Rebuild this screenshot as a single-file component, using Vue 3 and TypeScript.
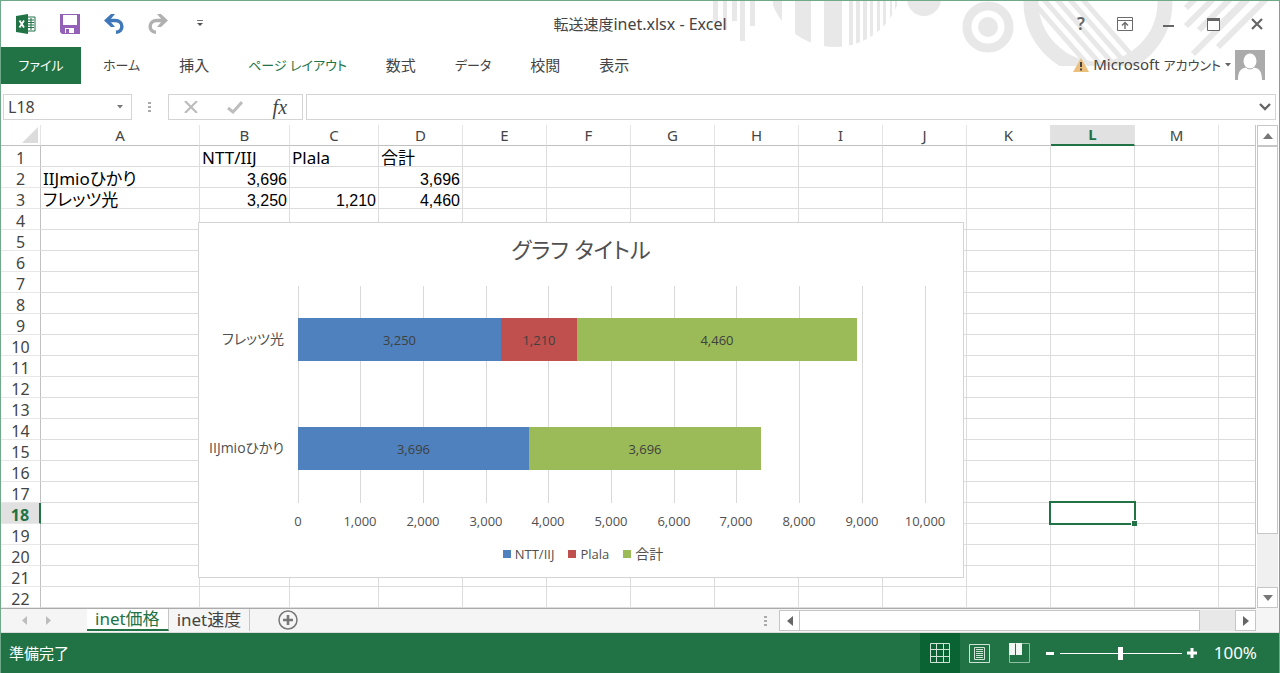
<script setup lang="ts">
import { computed, ref } from 'vue'

interface Segment { label: string; value: number; color: string }
interface Category { name: string; segments: Segment[] }

const nameBox = ref('L18')
const formula = ref('')
const zoom = ref(50)
const activeSheet = ref('inet価格')

const ribbonTabs = [
  { label: 'ファイル', kind: 'file', kana: true },
  { label: 'ホーム', kind: 'plain', kana: true },
  { label: '挿入', kind: 'plain', kana: false },
  { label: 'ページ レイアウト', kind: 'current', kana: true },
  { label: '数式', kind: 'plain', kana: false },
  { label: 'データ', kind: 'plain', kana: true },
  { label: '校閲', kind: 'plain', kana: false },
  { label: '表示', kind: 'plain', kana: false },
]

const columns = ['A', 'B', 'C', 'D', 'E', 'F', 'G', 'H', 'I', 'J', 'K', 'L', 'M', '']
const rowCount = 22
const selected = { col: 'L', row: 18 }

const cells: Record<string, string | number> = {
  B1: 'NTT/IIJ', C1: 'Plala', D1: '合計',
  A2: 'IIJmioひかり', B2: 3696, D2: 3696,
  A3: 'フレッツ光', B3: 3250, C3: 1210, D3: 4460,
}

const fmt = (n: number) => n.toLocaleString('en-US')
const cellText = (key: string) => {
  const v = cells[key]
  return typeof v === 'number' ? fmt(v) : v ?? ''
}

const blue = '#4e81bd'
const red = '#c0504d'
const green = '#9bbb59'

const categories: Category[] = [
  {
    name: 'フレッツ光',
    segments: [
      { label: 'NTT/IIJ', value: 3250, color: blue },
      { label: 'Plala', value: 1210, color: red },
      { label: '合計', value: 4460, color: green },
    ],
  },
  {
    name: 'IIJmioひかり',
    segments: [
      { label: 'NTT/IIJ', value: 3696, color: blue },
      { label: '合計', value: 3696, color: green },
    ],
  },
]

const legend = categories[0].segments
const ticks = Array.from({ length: 11 }, (_, i) => i * 1000)
const plot = { left: 99, top: 63, width: 627, height: 217, bar: 43 }
const xOf = (v: number) => plot.left + Math.floor((v / 10000) * plot.width)

const bars = computed(() =>
  categories.map((c, i) => {
    const band = plot.height / categories.length
    const mid = Math.round(plot.top + band * (i + 0.5))
    let sum = 0
    const parts = c.segments.map((s) => {
      const x = xOf(sum)
      sum += s.value
      return { ...s, x, w: xOf(sum) - x }
    })
    return { name: c.name, mid, parts }
  }),
)
</script>

<template>
  <div class="window">
    <svg class="decor" width="580" height="65" viewBox="700 1 580 65" aria-hidden="true">
      <defs>
        <clipPath id="disc"><circle cx="835" cy="-20" r="67" /></clipPath>
        <clipPath id="ringHole"><circle cx="1098" cy="2" r="60" /></clipPath>
      </defs>
      <g fill="#e8e8e8">
        <rect x="713" y="0" width="5" height="22" />
        <rect x="723" y="0" width="4" height="30" />
        <rect x="732" y="0" width="5" height="21" />
        <rect x="740" y="0" width="5" height="41" />
        <rect x="750" y="0" width="5" height="26" />
        <g clip-path="url(#disc)">
          <rect x="773" y="0" width="9" height="60" />
          <rect x="795" y="0" width="16" height="60" />
          <rect x="824" y="0" width="18" height="60" />
          <rect x="849" y="0" width="4" height="60" />
          <rect x="856" y="0" width="4" height="60" />
          <rect x="863" y="0" width="4" height="60" />
          <rect x="870" y="0" width="3" height="60" />
          <rect x="877" y="0" width="3" height="60" />
          <rect x="883" y="0" width="3" height="60" />
          <rect x="890" y="0" width="2" height="60" />
          <rect x="895" y="0" width="2" height="60" />
        </g>
        <circle cx="924" cy="-1" r="17" />
        <circle cx="988" cy="27" r="10" />
      </g>
      <circle cx="988" cy="27" r="21" fill="none" stroke="#e8e8e8" stroke-width="9" />
      <circle cx="1098" cy="2" r="67" fill="none" stroke="#e8e8e8" stroke-width="15" />
      <g clip-path="url(#ringHole)" stroke="#e8e8e8" stroke-width="5">
        <path d="M1026 -6L1096 74M1039 -6L1109 74M1052 -6L1122 74M1065 -6L1135 74M1078 -6L1148 74" />
      </g>
      <g stroke="#e8e8e8" stroke-width="6">
        <path d="M1186 8L1196 -2M1186 26L1214 -2M1199 30L1231 -2M1217 28L1247 -2M1193 54L1249 -2M1218 47L1267 -2" />
      </g>
    </svg>

    <header class="titlebar">
      <div class="quick">
        <button type="button" aria-label="Excel">
          <svg width="20" height="20" viewBox="0 0 20 20">
            <path d="M11 3H19V17H11Z" fill="#fff" stroke="#217346" />
            <path d="M12 6H18M12 8.500H18M12 11H18M12 13.500H18M15 4V16" stroke="#217346" fill="none" />
            <path d="M0 2L12 0V20L0 18Z" fill="#217346" />
            <path d="M3.500 6.500L8 13.500M8 6.500L3.500 13.500" stroke="#fff" stroke-width="1.800" />
          </svg>
        </button>
        <button type="button" aria-label="上書き保存">
          <svg width="20" height="20" viewBox="0 0 20 20">
            <path d="M0 0H20V20H2L0 18Z" fill="#9461b8" />
            <path d="M3 1H17V11H3Z" fill="#fff" />
            <path d="M5 14H14V19H5Z" fill="#fff" />
            <path d="M6 15H9V19H6Z" fill="#9461b8" />
          </svg>
        </button>
        <button type="button" aria-label="元に戻す">
          <svg width="20" height="20" viewBox="0 0 20 20">
            <path d="M3 6.500H11C20 6.500 20 18 12 18.300" fill="none" stroke="#3f77b8" stroke-width="3.400" />
            <path d="M0 6.500L7 0H11L5.500 6.500L11 13H7Z" fill="#3f77b8" />
          </svg>
        </button>
        <button type="button" aria-label="やり直し">
          <svg width="20" height="20" viewBox="0 0 20 20">
            <path d="M17 6.500H9C0 6.500 0 18 8 18.300" fill="none" stroke="#b0b0b0" stroke-width="3.400" />
            <path d="M20 6.500L13 0H9L14.500 6.500L9 13H13Z" fill="#b0b0b0" />
          </svg>
        </button>
        <button type="button" class="more" aria-label="クイック アクセス ツール バーのユーザー設定">
          <svg width="6" height="8" viewBox="0 0 6 8"><path d="M0 .500H6" stroke="#777" /><path d="M0 3H6L3 6Z" fill="#555" /></svg>
        </button>
      </div>
      <h1><span class="kanji">転送速度</span>inet.xlsx - Excel</h1>
      <div class="winctl">
        <button type="button" aria-label="ヘルプ" class="help">?</button>
        <button type="button" aria-label="リボンの表示オプション">
          <svg width="16" height="14" viewBox="0 0 16 14" fill="none" stroke="#6b6b6b"><path d="M.5.500H15.500V13.500H.5ZM.5 3.500H15.500" /><path d="M8 12V6M5 8.500L8 5.500L11 8.500" stroke-width="1.400" /></svg>
        </button>
        <button type="button" aria-label="最小化">
          <svg width="12" height="14" viewBox="0 0 12 14"><path d="M0 8H11V10H0Z" fill="#666" /></svg>
        </button>
        <button type="button" aria-label="最大化">
          <svg width="13" height="13" viewBox="0 0 13 13"><path d="M.5.500H12.500V12.500H.5Z" fill="#fff" stroke="#666" /><path d="M0 0H13V3H0Z" fill="#666" /></svg>
        </button>
        <button type="button" aria-label="閉じる">
          <svg width="12" height="12" viewBox="0 0 12 12"><path d="M1 1L11 11M11 1L1 11" stroke="#666" stroke-width="2.200" /></svg>
        </button>
      </div>
    </header>

    <nav class="ribbon">
      <button v-for="t in ribbonTabs" :key="t.label" type="button" :class="['tab', t.kind, { kana: t.kana }]">{{ t.label }}</button>
      <button type="button" class="account">
        <svg width="16" height="14" viewBox="0 0 16 14"><path d="M8 0L16 14H0Z" fill="#edbf7c" /><path d="M7 4H9V9H7ZM7 10.500H9V12.500H7Z" fill="#444" /></svg>
        <span class="acct">Microsoft <span class="kana">アカウント</span></span>
        <svg class="caret" width="6" height="4" viewBox="0 0 6 4"><path d="M0 0H6L3 3.500Z" fill="#666" /></svg>
        <svg width="30" height="30" viewBox="0 0 30 30"><path d="M0 0H30V30H0Z" fill="#ababab" /><ellipse cx="15" cy="11" rx="6.500" ry="7.500" fill="#fff" /><path d="M3 30C3 21 6 18.500 11 17.500C13 20 17 20 19 17.500C24 18.500 27 21 27 30Z" fill="#fff" /></svg>
      </button>
    </nav>

    <div class="formula">
      <div class="namebox">
        <input v-model="nameBox" type="text" aria-label="名前ボックス" />
        <button type="button" aria-label="名前の一覧"><svg width="6" height="4" viewBox="0 0 6 4"><path d="M0 0H6L3 3.500Z" fill="#777" /></svg></button>
      </div>
      <svg class="grip" width="3" height="11" viewBox="0 0 3 11"><path d="M0 0H3V2H0ZM0 4H3V6H0ZM0 8H3V10H0Z" fill="#aaa" /></svg>
      <div class="fxgroup">
        <button type="button" aria-label="キャンセル"><svg width="14" height="12" viewBox="0 0 14 12"><path d="M1 0L13 12M13 0L1 12" stroke="#bdbdbd" stroke-width="2.200" /></svg></button>
        <button type="button" aria-label="入力"><svg width="16" height="13" viewBox="0 0 16 13"><path d="M1 7L6 11L15 1" fill="none" stroke="#bdbdbd" stroke-width="3" /></svg></button>
        <button type="button" aria-label="関数の挿入" class="fx">fx</button>
      </div>
      <div class="fbox">
        <input v-model="formula" type="text" aria-label="数式バー" />
        <button type="button" aria-label="数式バーの展開"><svg width="12" height="8" viewBox="0 0 12 8"><path d="M1 1L6 6L11 1" fill="none" stroke="#666" stroke-width="2.400" /></svg></button>
      </div>
    </div>

    <main class="work">
      <div class="sheet">
        <table>
          <colgroup>
            <col class="w-row" /><col class="w-a" /><col class="w-b" /><col class="w-c" />
            <col v-for="n in 10" :key="n" class="w-d" /><col />
          </colgroup>
          <thead>
            <tr>
              <th class="corner"><svg width="16" height="16" viewBox="0 0 16 16"><path d="M16 0V16H0Z" fill="#dcdcdc" /></svg></th>
              <th v-for="c in columns" :key="c" scope="col" :class="{ sel: c === selected.col }">{{ c }}</th>
            </tr>
          </thead>
          <tbody>
            <tr v-for="r in rowCount" :key="r">
              <th scope="row" :class="{ sel: r === selected.row }">{{ r }}</th>
              <td v-for="c in columns" :key="c" :class="{ num: typeof cells[c + r] === 'number' }">{{ cellText(c + r) }}<span v-if="c === selected.col && r === selected.row" class="cursor"><i></i></span></td>
            </tr>
          </tbody>
        </table>

        <figure class="chart">
          <svg width="764" height="354" viewBox="0 0 764 354" role="img" aria-label="グラフ タイトル">
            <text class="ct" x="382" y="35">グラフ タイトル</text>
            <path v-for="t in ticks" :key="t" :d="`M${xOf(t) + 0.5} ${plot.top}V${plot.top + plot.height}`" stroke="#d9d9d9" />
            <g v-for="b in bars" :key="b.name">
              <text class="cat" :x="plot.left - 14" :y="b.mid + 4">{{ b.name }}</text>
              <rect v-for="p in b.parts" :key="p.label" :x="p.x" :y="b.mid - 22" :width="p.w" :height="plot.bar" :fill="p.color" />
              <text v-for="p in b.parts" :key="p.label" class="val" :x="p.x + p.w / 2" :y="b.mid + 5">{{ fmt(p.value) }}</text>
            </g>
            <text v-for="t in ticks" :key="t" class="tick" :x="xOf(t)" :y="plot.top + plot.height + 23">{{ fmt(t) }}</text>
          </svg>
          <ul class="legend">
            <li v-for="l in legend" :key="l.label"><i :style="{ background: l.color }"></i>{{ l.label }}</li>
          </ul>
        </figure>
      </div>

      <div class="vscroll">
        <button type="button" aria-label="上へ"><svg width="10" height="6" viewBox="0 0 10 6"><path d="M0 6H10L5 0Z" fill="#777" /></svg></button>
        <div class="vtrack"><div class="vthumb"></div></div>
        <button type="button" aria-label="下へ"><svg width="10" height="6" viewBox="0 0 10 6"><path d="M0 0H10L5 6Z" fill="#777" /></svg></button>
      </div>
    </main>

    <div class="sheetbar">
      <div class="navs">
        <button type="button" aria-label="前のシート"><svg width="5" height="9" viewBox="0 0 5 9"><path d="M5 0V9L0 4.500Z" fill="#bdbdbd" /></svg></button>
        <button type="button" aria-label="次のシート"><svg width="5" height="9" viewBox="0 0 5 9"><path d="M0 0V9L5 4.500Z" fill="#bdbdbd" /></svg></button>
      </div>
      <button v-for="s in ['inet価格', 'inet速度']" :key="s" type="button" :class="['stab', { active: s === activeSheet }]" @click="activeSheet = s">{{ s }}</button>
      <button type="button" class="add" aria-label="新しいシート"><svg width="20" height="20" viewBox="0 0 20 20" fill="none" stroke="#777"><circle cx="10" cy="10" r="9" stroke-width="1.500" /><path d="M10 5V15M5 10H15" stroke-width="2.600" /></svg></button>
      <svg class="hgrip" width="3" height="11" viewBox="0 0 3 11"><path d="M0 0H3V2H0ZM0 4H3V6H0ZM0 8H3V10H0Z" fill="#aaa" /></svg>
      <div class="hscroll">
        <button type="button" aria-label="左へ"><svg width="6" height="10" viewBox="0 0 6 10"><path d="M6 0V10L0 5Z" fill="#666" /></svg></button>
        <div class="htrack"><div class="hthumb"></div></div>
        <button type="button" aria-label="右へ"><svg width="6" height="10" viewBox="0 0 6 10"><path d="M0 0V10L6 5Z" fill="#666" /></svg></button>
      </div>
    </div>

    <footer class="status">
      <span class="ready">準備完了</span>
      <button type="button" class="view on" aria-label="標準"><svg width="20" height="20" viewBox="0 0 20 20" fill="none" stroke="#cfe3d6"><path d="M.5.500H19.500V19.500H.5ZM6.500 0V20M13.500 0V20M0 6.500H20M0 13.500H20" /></svg></button>
      <button type="button" class="view" aria-label="ページ レイアウト"><svg width="21" height="19" viewBox="0 0 21 19" fill="none" stroke="#cfe3d6"><path d="M.5.500H20.500V18.500H.5ZM5.500 3.500H15.500V15.500H5.500ZM7 5.500H14M7 7.500H14M7 9.500H14M7 11.500H14M7 13.500H14" /></svg></button>
      <button type="button" class="view" aria-label="改ページ プレビュー"><svg width="21" height="20" viewBox="0 0 21 20"><path d="M.5.500H20.500V19.500H.5Z" fill="none" stroke="#8fbfa2" /><path d="M0 0H6V12H0ZM7 0H13V12H7Z" fill="#f0f6f2" /></svg></button>
      <button type="button" class="zb" aria-label="縮小"><svg width="8" height="9" viewBox="0 0 8 9"><path d="M0 3H8V6H0Z" fill="#fff" /></svg></button>
      <input v-model="zoom" type="range" min="0" max="100" aria-label="ズーム" />
      <button type="button" class="zb" aria-label="拡大"><svg width="10" height="10" viewBox="0 0 10 10"><path d="M0 3.500H3.500V0H6.500V3.500H10V6.500H6.500V10H3.500V6.500H0Z" fill="#fff" /></svg></button>
      <button type="button" class="pct">100%</button>
    </footer>
  </div>
</template>

<style>
body { margin: 0; background: #fff; }
</style>

<style scoped>
* { box-sizing: border-box; }
.window {
  position: relative;
  display: flex;
  flex-direction: column;
  min-height: 100vh;
  border: 1px solid #6fa98a;
  border-bottom: 0;
  background: #fff;
  color: #444;
  font: 16px/20px "Noto Sans", "Noto Sans CJK JP", sans-serif;
}
button { padding: 0; border: 0; background: none; color: inherit; font: inherit; cursor: pointer; }
button svg { display: block; }
input { min-width: 0; border: 0; outline: 0; padding: 0; background: none; color: inherit; font: inherit; }
.kana { font-size: 13px; font-feature-settings: "palt"; }
.kanji { font-size: 15px; }

.decor { position: absolute; top: 0; right: -1px; }

.titlebar { position: relative; display: grid; grid-template-columns: 1fr auto 1fr; align-items: center; height: 46px; }
.quick { display: flex; padding-left: 3px; }
.quick button, .winctl button { display: flex; align-items: center; justify-content: center; width: 44px; height: 28px; }
.quick .more { width: 40px; }
h1 { margin: 0; font-size: 16px; font-weight: 400; }
.winctl { display: flex; justify-content: flex-end; }
.help { font-weight: 600; font-size: 17px; color: #666; }

.ribbon { position: relative; display: flex; height: 37px; }
.tab { padding: 0 19px 2px 20px; font-size: 15px; white-space: nowrap; }
.tab.kana { font-size: 13px; }
.tab.file { width: 80px; padding: 0 0 2px; margin-right: 2px; background: #217346; color: #fff; }
.tab.current { color: #217346; }
.account { display: flex; align-items: center; margin-left: auto; padding: 0 14px 2px 0; font-size: 15px; }
.acct { margin-left: 4px; white-space: nowrap; }
.caret { margin: 0 4px; }

.formula { display: flex; align-items: center; padding: 10px 3px 5px 2px; }
.namebox, .fxgroup, .fbox { display: flex; height: 26px; border: 1px solid #d4d4d4; background: #fff; }
.namebox { width: 129px; }
.namebox input { flex: 1; padding-left: 4px; }
.namebox button { display: grid; place-items: center; width: 22px; }
.grip { margin: 0 17px 0 16px; }
.fxgroup { width: 135px; margin-right: 3px; }
.fxgroup button { flex: 1; display: grid; place-items: center; }
.fxgroup .fx { font: italic 20px/24px "Liberation Serif", serif; color: #444; }
.fbox { flex: 1; }
.fbox input { flex: 1; padding-left: 4px; }
.fbox button { display: grid; place-items: center; width: 20px; }

.work { display: flex; flex: 1; }
.sheet { position: relative; flex: 1; min-width: 0; border-right: 1px solid #c6c6c6; border-bottom: 1px solid #ababab; margin-bottom: -1px; overflow: hidden; }
table { width: 100%; table-layout: fixed; border-collapse: separate; border-spacing: 0; }
.w-row { width: 40px; }
.w-a { width: 159px; }
.w-b { width: 90px; }
.w-c { width: 89px; }
.w-d { width: 84px; }
th, td { height: 21px; padding: 0; border-right: 1px solid #dcdcdc; border-bottom: 1px solid #dcdcdc; line-height: 20px; white-space: nowrap; }
th { font-weight: 400; font-size: 16px; text-align: center; }
thead th { border-right-color: #e4e4e4; border-bottom-color: #c0c0c0; font-size: 15px; }
thead th.sel { background: #e1e1e1; color: #217346; font-weight: 700; border-bottom: 2px solid #217346; line-height: 19px; }
tbody th { padding-top: 4px; border-right-color: #c0c0c0; border-bottom-color: #e8e8e8; line-height: 16px; }
tbody th.sel { background: #e1e1e1; color: #217346; font-weight: 700; border-right: 2px solid #217346; }
.corner svg { display: block; margin-left: 21px; }
td { position: relative; padding: 4px 2px 0; color: #000; font-size: 17px; line-height: 14px; font-feature-settings: "palt"; }
th:last-child, td:last-child { border-right: 0; }
.num { padding-top: 5px; font-size: 16px; font-family: "Liberation Sans", sans-serif; text-align: right; }
.cursor { position: absolute; inset: -2px; border: 2px solid #217346; z-index: 1; }
.cursor i { position: absolute; right: -3px; bottom: -3px; width: 6px; height: 6px; border: 1px solid #fff; border-right: 0; border-bottom: 0; background: #217346; }

.chart { position: absolute; left: 197px; top: 97px; width: 766px; height: 356px; margin: 0; border: 1px solid #d4d4d4; background: #fff; color: #505050; }
.chart svg { display: block; }
.chart text { fill: #505050; font: 13px "Open Sans", "Noto Sans CJK JP", sans-serif; font-feature-settings: "palt"; text-anchor: middle; }
.chart .ct { font-size: 22px; }
.chart .cat { font-size: 14px; text-anchor: end; }
.chart .val { fill: #404040; }
.legend { position: absolute; left: 0; right: 0; bottom: 13px; display: flex; justify-content: center; gap: 14px; margin: 0; padding: 0 0 0 4px; list-style: none; font: 13px/20px "Open Sans", "Noto Sans CJK JP", sans-serif; }
.legend li { display: flex; align-items: center; gap: 4px; }
.legend li:last-child { font-size: 14px; }
.legend i { width: 8px; height: 8px; }

.vscroll { display: flex; flex-direction: column; width: 23px; padding: 0 1px; }
.vscroll button { display: grid; place-items: center; height: 21px; border: 1px solid #c6c6c6; background: #fff; }
.vtrack { flex: 1; background: #f0f0f0; }
.vthumb { height: 88%; border: 1px solid #c6c6c6; background: #fff; }

.sheetbar { display: flex; align-items: stretch; height: 25px; padding-right: 23px; background: #f5f5f5; border-bottom: 1px solid #dcdcdc; }
.navs { display: flex; width: 86px; padding-left: 11px; }
.navs button { display: grid; place-items: center; width: 24px; }
.stab { height: 23px; padding: 0 8px; border-right: 1px solid #c6c6c6; font-size: 17px; line-height: 20px; }
.stab.active { border-bottom: 2px solid #217346; background: #fff; color: #217346; }
.add { display: grid; place-items: center; margin-left: 28px; }
.hgrip { margin: 8px 12px 0 auto; }
.hscroll { display: flex; width: 477px; height: 21px; margin-top: 2px; }
.hscroll button { display: grid; place-items: center; width: 21px; border: 1px solid #c6c6c6; background: #fff; }
.htrack { flex: 1; background: #e8e8e8; }
.hthumb { width: 92%; height: 100%; border: 1px solid #c6c6c6; border-left: 0; background: #fff; }

.status { display: flex; align-items: center; height: 40px; padding: 0 22px 0 8px; background: #217346; color: #fff; }
.ready { margin-right: auto; font-size: 15px; }
.view { display: grid; place-items: center; width: 40px; height: 40px; }
.view.on { background: #0a6332; }
.zb { display: grid; place-items: center; width: 20px; height: 20px; }
.status input { width: 122px; height: 16px; margin: 0; appearance: none; }
.status input::-webkit-slider-runnable-track { height: 13px; background: linear-gradient(#fff, #fff) center / 100% 1px no-repeat; }
.status input::-webkit-slider-thumb { appearance: none; width: 5px; height: 13px; background: #fff; }
.pct { margin-left: 12px; font-size: 17px; }
</style>
